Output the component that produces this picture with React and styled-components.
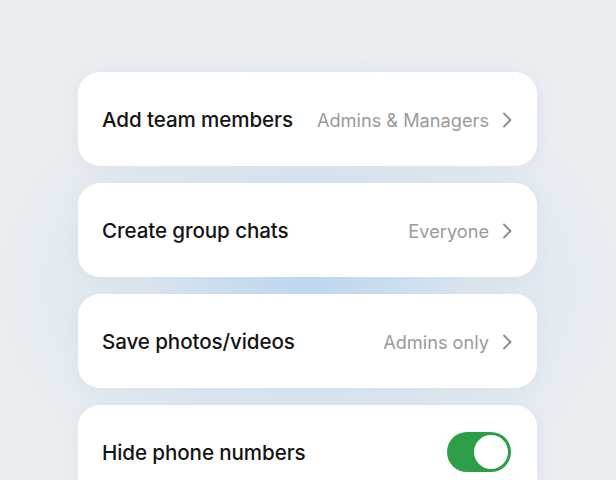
import React from 'react'
import styled, { createGlobalStyle } from 'styled-components'

const GlobalStyle = createGlobalStyle`
  html, body {
    margin: 0;
    padding: 0;
  }
  body {
    font-family: Inter, "Noto Sans", sans-serif;
    -webkit-font-smoothing: antialiased;
  }
`

const rows = [
  { label: 'Add team members', value: 'Admins & Managers' },
  { label: 'Create group chats', value: 'Everyone' },
  { label: 'Save photos/videos', value: 'Admins only' },
  { label: 'Hide phone numbers', toggle: true },
]

function Chevron() {
  return (
    <svg width="10" height="16" viewBox="0 0 10 16" fill="none">
      <path d="M2 1.5 L8.5 8 L2 14.5" stroke="#8a8a8a" strokeWidth="1.8" strokeLinecap="round" strokeLinejoin="round" />
    </svg>
  )
}

function App() {
  return (
    <>
      <GlobalStyle />
      <Page>
        <List>
          {rows.map((row) => (
            <Card key={row.label}>
              <Label>{row.label}</Label>
              {row.toggle ? (
                <Toggle $on>
                  <Knob />
                </Toggle>
              ) : (
                <Right>
                  <Value>{row.value}</Value>
                  <Chevron />
                </Right>
              )}
            </Card>
          ))}
        </List>
      </Page>
    </>
  )
}

export default App

const Page = styled.div`
  width: 616px;
  height: 480px;
  overflow: hidden;
  box-sizing: border-box;
  padding-top: 72px;
  background:
    radial-gradient(ellipse 320px 240px at 308px 285px, rgba(190, 216, 240, 0.95), rgba(208, 226, 241, 0.55) 50%, rgba(234, 238, 241, 0) 100%),
    #eaedf0;
`

const List = styled.div`
  width: 459px;
  margin: 0 0 0 78px;
  display: flex;
  flex-direction: column;
  gap: 17px;
`

const Card = styled.div`
  height: 94px;
  flex-shrink: 0;
  box-sizing: border-box;
  padding: 0 25px 0 24px;
  background: #ffffff;
  border-radius: 22px;
  display: flex;
  align-items: center;
  justify-content: space-between;
  box-shadow: 0 2px 16px rgba(150, 170, 195, 0.12);
`

const Label = styled.span`
  font-size: 20.6px;
  font-weight: 500;
  color: #141414;
  letter-spacing: -0.1px;
`

const Right = styled.div`
  display: flex;
  align-items: center;
  gap: 13px;
  padding-top: 1px;
`

const Value = styled.span`
  font-size: 18.2px;
  font-weight: 400;
  color: #9a9a9a;
`

const Toggle = styled.div`
  width: 64px;
  height: 40px;
  margin-right: 1px;
  box-sizing: border-box;
  padding: 3px;
  border-radius: 20px;
  background: ${(p) => (p.$on ? '#2d9e48' : '#d0d0d0')};
  display: flex;
  justify-content: ${(p) => (p.$on ? 'flex-end' : 'flex-start')};
  align-items: center;
`

const Knob = styled.div`
  width: 34px;
  height: 34px;
  border-radius: 50%;
  background: #ffffff;
`
